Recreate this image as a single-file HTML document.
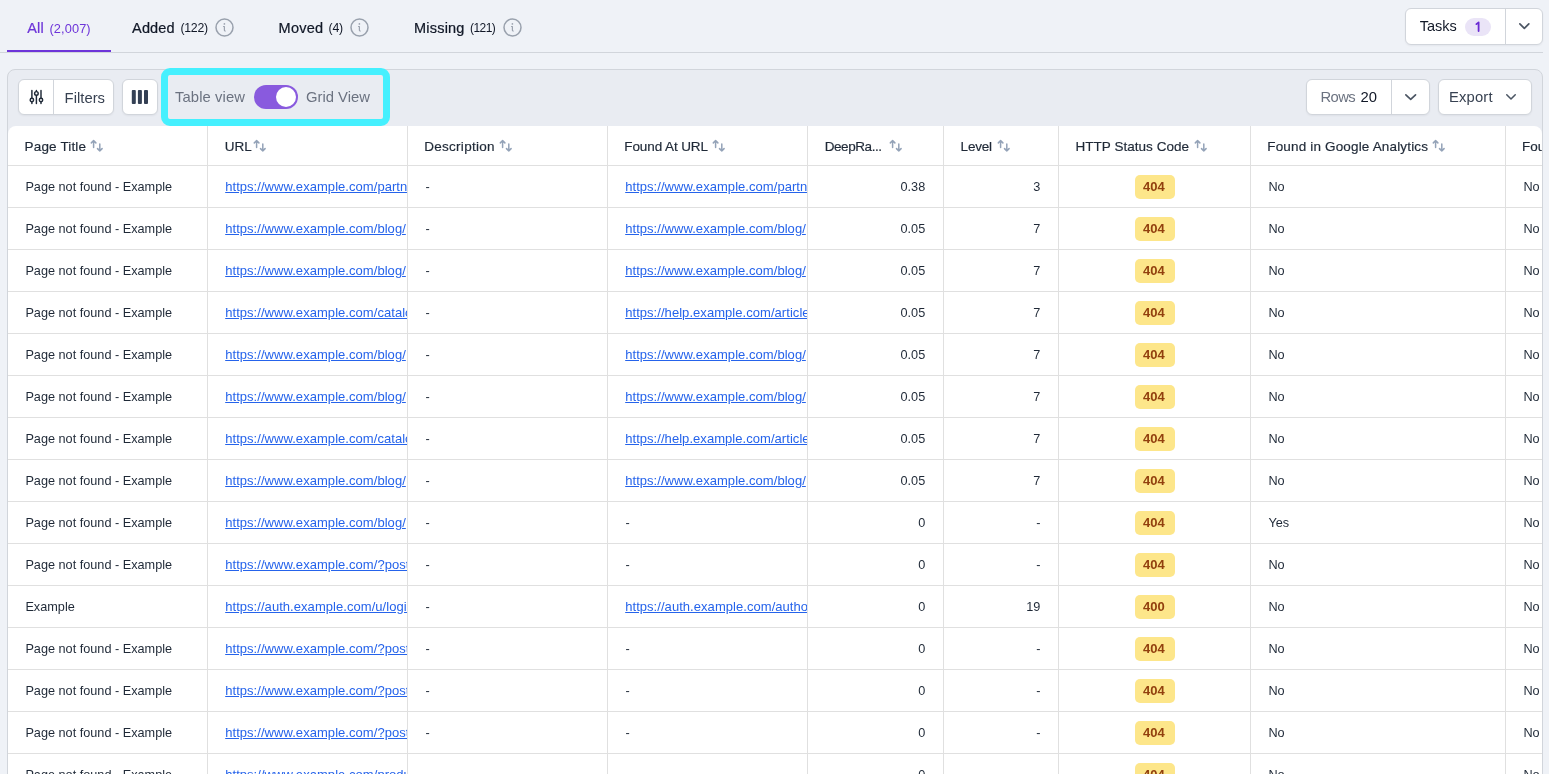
<!DOCTYPE html><html><head><meta charset="utf-8"><style>
*{margin:0;padding:0;box-sizing:border-box}
html,body{width:1549px;height:774px;overflow:hidden;background:#EFF2F7;font-family:"Liberation Sans", sans-serif;color:#1F2937}
.a{position:absolute;white-space:nowrap}
.btn{position:absolute;background:#fff;border:1px solid #D1D5DB;border-radius:6px;box-shadow:0 1px 2px rgba(16,24,40,0.05)}
.lnk{text-decoration:underline;text-underline-offset:1px;overflow:hidden}
.badge{position:absolute;width:40px;height:24px;border-radius:5px;background:#FDE68A}
.vl{position:absolute;width:1px;background:#E0E0E0}
.hl{position:absolute;height:1px;background:#E0E0E0}
</style></head><body><div style="position:absolute;left:0;top:0;width:1549px;height:774px;overflow:hidden;will-change:transform;background:#EFF2F7">
<div class="a" style="left:27.30px;top:18.97px;font-size:14.5px;line-height:18px;letter-spacing:0.100px;color:#6D35D9;-webkit-text-stroke:0.22px #6D35D9;">All</div>
<div class="a" style="left:49.50px;top:20.56px;font-size:12.8px;line-height:16px;letter-spacing:0.092px;color:#6D35D9;">(2,007)</div>
<div class="a" style="left:132.10px;top:18.97px;font-size:14.5px;line-height:18px;letter-spacing:0.113px;color:#111827;-webkit-text-stroke:0.22px #111827;">Added</div>
<div class="a" style="left:180.40px;top:21.24px;font-size:12.3px;line-height:15px;letter-spacing:-0.250px;color:#111827;">(122)</div>
<svg class="a" style="left:215.0px;top:17.5px" width="19" height="19" viewBox="0 0 19 19"><circle cx="9.5" cy="9.5" r="8.5" stroke="#99A1AD" stroke-width="1.5" fill="none"/><circle cx="9.4" cy="5.9" r="0.85" fill="#9CA3AF"/><path d="M8.5 8.5H9.4V12.2Q9.4 13 10.3 13" stroke="#9CA3AF" stroke-width="1.2" fill="none" stroke-linecap="round" stroke-linejoin="round"/></svg>
<div class="a" style="left:278.60px;top:18.97px;font-size:14.5px;line-height:18px;letter-spacing:0.225px;color:#111827;-webkit-text-stroke:0.22px #111827;">Moved</div>
<div class="a" style="left:328.60px;top:21.24px;font-size:12.3px;line-height:15px;letter-spacing:-0.225px;color:#111827;">(4)</div>
<svg class="a" style="left:349.7px;top:17.5px" width="19" height="19" viewBox="0 0 19 19"><circle cx="9.5" cy="9.5" r="8.5" stroke="#99A1AD" stroke-width="1.5" fill="none"/><circle cx="9.4" cy="5.9" r="0.85" fill="#9CA3AF"/><path d="M8.5 8.5H9.4V12.2Q9.4 13 10.3 13" stroke="#9CA3AF" stroke-width="1.2" fill="none" stroke-linecap="round" stroke-linejoin="round"/></svg>
<div class="a" style="left:414.00px;top:18.97px;font-size:14.5px;line-height:18px;letter-spacing:0.208px;color:#111827;-webkit-text-stroke:0.22px #111827;">Missing</div>
<div class="a" style="left:470.00px;top:21.34px;font-size:12.0px;line-height:15px;letter-spacing:-0.550px;color:#111827;">(121)</div>
<svg class="a" style="left:502.8px;top:17.6px" width="19" height="19" viewBox="0 0 19 19"><circle cx="9.5" cy="9.5" r="8.5" stroke="#99A1AD" stroke-width="1.5" fill="none"/><circle cx="9.4" cy="5.9" r="0.85" fill="#9CA3AF"/><path d="M8.5 8.5H9.4V12.2Q9.4 13 10.3 13" stroke="#9CA3AF" stroke-width="1.2" fill="none" stroke-linecap="round" stroke-linejoin="round"/></svg>
<div class="a" style="left:0;top:52px;width:1543px;height:1px;background:#D1D5DB"></div>
<div class="a" style="left:7px;top:50px;width:104px;height:2px;background:#6D35D9"></div>
<div class="btn" style="left:1405px;top:8px;width:138px;height:37px"></div>
<div class="a" style="left:1505px;top:9px;width:1px;height:35px;background:#D1D5DB"></div>
<div class="a" style="left:1419.80px;top:16.77px;font-size:14.5px;line-height:18px;letter-spacing:-0.037px;color:#111827;">Tasks</div>
<div class="a" style="left:1465px;top:18px;width:26px;height:18px;border-radius:9px;background:#EAE4F7"></div>
<svg class="a" style="left:1472px;top:20px" width="12" height="14" viewBox="0 0 12 14"><path d="M4.4 4.1L6.6 2.4V11.1" stroke="#6A2BD3" stroke-width="1.8" fill="none" stroke-linecap="round" stroke-linejoin="round"/></svg>
<svg class="a" style="left:1518.3px;top:22.3px" width="12.7" height="8.3" viewBox="0 0 12.7 8.3"><path d="M1.85 1.85L6.35 6.45L10.85 1.85" stroke="#4B5563" stroke-width="1.7" fill="none" stroke-linecap="round" stroke-linejoin="round"/></svg>
<div class="a" style="left:7px;top:69px;width:1536px;height:720px;background:#E9ECF2;border:1px solid #D1D5DB;border-radius:8px"></div>
<div class="btn" style="left:18px;top:79px;width:96px;height:36px"></div>
<div class="a" style="left:53px;top:80px;width:1px;height:34px;background:#D1D5DB"></div>
<svg class="a" style="left:29px;top:89px" width="16" height="16" viewBox="0 0 16 16"><g stroke="#1F2937" stroke-width="1.45" fill="#fff" stroke-linecap="round"><path d="M2.9 1.4V14.4M7.4 1.4V14.4M12.0 1.4V14.4"/><circle cx="2.9" cy="11.0" r="1.7"/><circle cx="7.4" cy="4.4" r="1.8"/><circle cx="12.0" cy="11.0" r="1.7"/></g></svg>
<div class="a" style="left:64.60px;top:88.77px;font-size:14.8px;line-height:18px;letter-spacing:0.017px;color:#374151;">Filters</div>
<div class="btn" style="left:122px;top:79px;width:36px;height:36px"></div>
<svg class="a" style="left:131px;top:89px" width="18" height="16" viewBox="0 0 18 16"><g fill="#344054"><rect x="0.8" y="1" width="4" height="14" rx="0.9"/><rect x="6.9" y="1" width="4" height="14" rx="0.9"/><rect x="13" y="1" width="4" height="14" rx="0.9"/></g></svg>
<div class="a" style="left:161px;top:68px;width:229px;height:58px;border:7px solid #45F0FE;border-radius:9px;z-index:5"></div>
<div class="a" style="left:175.00px;top:87.67px;font-size:14.8px;line-height:18px;letter-spacing:0.094px;color:#6B7280;">Table view</div>
<div class="a" style="left:254px;top:85px;width:44px;height:24px;border-radius:12px;background:#895ADE"></div>
<div class="a" style="left:276px;top:87px;width:20px;height:20px;border-radius:50%;background:#fff"></div>
<div class="a" style="left:306.00px;top:87.67px;font-size:14.8px;line-height:18px;letter-spacing:0.006px;color:#6B7280;">Grid View</div>
<div class="btn" style="left:1306px;top:79px;width:124px;height:36px"></div>
<div class="a" style="left:1391px;top:80px;width:1px;height:34px;background:#D1D5DB"></div>
<div class="a" style="left:1320.40px;top:87.87px;font-size:14.8px;line-height:18px;letter-spacing:-0.567px;color:#6B7280;">Rows</div>
<div class="a" style="left:1360.60px;top:87.87px;font-size:14.8px;line-height:18px;letter-spacing:-0.050px;color:#111827;">20</div>
<svg class="a" style="left:1404.0px;top:92.7px" width="13.4" height="8.2" viewBox="0 0 13.4 8.2"><path d="M1.85 1.85L6.7 6.3500000000000005L11.55 1.85" stroke="#4B5563" stroke-width="1.7" fill="none" stroke-linecap="round" stroke-linejoin="round"/></svg>
<div class="btn" style="left:1438px;top:79px;width:94px;height:36px"></div>
<div class="a" style="left:1449.00px;top:88.37px;font-size:14.8px;line-height:18px;letter-spacing:0.160px;color:#374151;">Export</div>
<svg class="a" style="left:1505.0px;top:93.2px" width="12" height="7.8" viewBox="0 0 12 7.8"><path d="M1.75 1.75L6.0 6.05L10.25 1.75" stroke="#4B5563" stroke-width="1.5" fill="none" stroke-linecap="round" stroke-linejoin="round"/></svg>
<div class="a" style="left:8px;top:126px;width:1534px;height:660px;background:#fff;border-radius:8px 8px 0 0;overflow:hidden"></div>
<div class="vl" style="left:207px;top:126px;height:660px"></div>
<div class="vl" style="left:407px;top:126px;height:660px"></div>
<div class="vl" style="left:607px;top:126px;height:660px"></div>
<div class="vl" style="left:807px;top:126px;height:660px"></div>
<div class="vl" style="left:943px;top:126px;height:660px"></div>
<div class="vl" style="left:1058px;top:126px;height:660px"></div>
<div class="vl" style="left:1250px;top:126px;height:660px"></div>
<div class="vl" style="left:1505px;top:126px;height:660px"></div>
<div class="hl" style="left:8px;top:165px;width:1534px"></div>
<div class="hl" style="left:8px;top:207px;width:1534px"></div>
<div class="hl" style="left:8px;top:249px;width:1534px"></div>
<div class="hl" style="left:8px;top:291px;width:1534px"></div>
<div class="hl" style="left:8px;top:333px;width:1534px"></div>
<div class="hl" style="left:8px;top:375px;width:1534px"></div>
<div class="hl" style="left:8px;top:417px;width:1534px"></div>
<div class="hl" style="left:8px;top:459px;width:1534px"></div>
<div class="hl" style="left:8px;top:501px;width:1534px"></div>
<div class="hl" style="left:8px;top:543px;width:1534px"></div>
<div class="hl" style="left:8px;top:585px;width:1534px"></div>
<div class="hl" style="left:8px;top:627px;width:1534px"></div>
<div class="hl" style="left:8px;top:669px;width:1534px"></div>
<div class="hl" style="left:8px;top:711px;width:1534px"></div>
<div class="hl" style="left:8px;top:753px;width:1534px"></div>
<div class="hl" style="left:8px;top:795px;width:1534px"></div>
<div class="a" style="left:24.60px;top:137.62px;font-size:13.5px;line-height:17px;letter-spacing:0.150px;color:#1F2937;-webkit-text-stroke:0.18px #1F2937;">Page Title</div>
<svg class="a" style="left:90.2px;top:139px" width="14" height="14" viewBox="0 0 14 14"><g stroke="#94A3B8" stroke-width="1.5" fill="none" stroke-linecap="round" stroke-linejoin="round"><path d="M3.6 8.6V1.6M1.3 3.9L3.6 1.6L5.9 3.9"/><path d="M9.8 4.9V11.9M7.5 9.6L9.8 11.9L12.1 9.6"/></g></svg>
<div class="a" style="left:224.70px;top:137.62px;font-size:13.5px;line-height:17px;letter-spacing:0.000px;color:#1F2937;-webkit-text-stroke:0.18px #1F2937;">URL</div>
<svg class="a" style="left:253.3px;top:139px" width="14" height="14" viewBox="0 0 14 14"><g stroke="#94A3B8" stroke-width="1.5" fill="none" stroke-linecap="round" stroke-linejoin="round"><path d="M3.6 8.6V1.6M1.3 3.9L3.6 1.6L5.9 3.9"/><path d="M9.8 4.9V11.9M7.5 9.6L9.8 11.9L12.1 9.6"/></g></svg>
<div class="a" style="left:424.30px;top:137.62px;font-size:13.5px;line-height:17px;letter-spacing:0.265px;color:#1F2937;-webkit-text-stroke:0.18px #1F2937;">Description</div>
<svg class="a" style="left:499.2px;top:139px" width="14" height="14" viewBox="0 0 14 14"><g stroke="#94A3B8" stroke-width="1.5" fill="none" stroke-linecap="round" stroke-linejoin="round"><path d="M3.6 8.6V1.6M1.3 3.9L3.6 1.6L5.9 3.9"/><path d="M9.8 4.9V11.9M7.5 9.6L9.8 11.9L12.1 9.6"/></g></svg>
<div class="a" style="left:624.30px;top:137.62px;font-size:13.5px;line-height:17px;letter-spacing:-0.100px;color:#1F2937;-webkit-text-stroke:0.18px #1F2937;">Found At URL</div>
<svg class="a" style="left:712.0px;top:139px" width="14" height="14" viewBox="0 0 14 14"><g stroke="#94A3B8" stroke-width="1.5" fill="none" stroke-linecap="round" stroke-linejoin="round"><path d="M3.6 8.6V1.6M1.3 3.9L3.6 1.6L5.9 3.9"/><path d="M9.8 4.9V11.9M7.5 9.6L9.8 11.9L12.1 9.6"/></g></svg>
<div class="a" style="left:824.70px;top:137.62px;font-size:13.5px;line-height:17px;letter-spacing:-0.425px;color:#1F2937;-webkit-text-stroke:0.18px #1F2937;">DeepRa...</div>
<svg class="a" style="left:889.1px;top:139px" width="14" height="14" viewBox="0 0 14 14"><g stroke="#94A3B8" stroke-width="1.5" fill="none" stroke-linecap="round" stroke-linejoin="round"><path d="M3.6 8.6V1.6M1.3 3.9L3.6 1.6L5.9 3.9"/><path d="M9.8 4.9V11.9M7.5 9.6L9.8 11.9L12.1 9.6"/></g></svg>
<div class="a" style="left:960.60px;top:137.62px;font-size:13.5px;line-height:17px;letter-spacing:-0.188px;color:#1F2937;-webkit-text-stroke:0.18px #1F2937;">Level</div>
<svg class="a" style="left:997.2px;top:139px" width="14" height="14" viewBox="0 0 14 14"><g stroke="#94A3B8" stroke-width="1.5" fill="none" stroke-linecap="round" stroke-linejoin="round"><path d="M3.6 8.6V1.6M1.3 3.9L3.6 1.6L5.9 3.9"/><path d="M9.8 4.9V11.9M7.5 9.6L9.8 11.9L12.1 9.6"/></g></svg>
<div class="a" style="left:1075.50px;top:137.62px;font-size:13.5px;line-height:17px;letter-spacing:0.030px;color:#1F2937;-webkit-text-stroke:0.18px #1F2937;">HTTP Status Code</div>
<svg class="a" style="left:1194.0px;top:139px" width="14" height="14" viewBox="0 0 14 14"><g stroke="#94A3B8" stroke-width="1.5" fill="none" stroke-linecap="round" stroke-linejoin="round"><path d="M3.6 8.6V1.6M1.3 3.9L3.6 1.6L5.9 3.9"/><path d="M9.8 4.9V11.9M7.5 9.6L9.8 11.9L12.1 9.6"/></g></svg>
<div class="a" style="left:1267.30px;top:137.62px;font-size:13.5px;line-height:17px;letter-spacing:0.160px;color:#1F2937;-webkit-text-stroke:0.18px #1F2937;">Found in Google Analytics</div>
<svg class="a" style="left:1432.0px;top:139px" width="14" height="14" viewBox="0 0 14 14"><g stroke="#94A3B8" stroke-width="1.5" fill="none" stroke-linecap="round" stroke-linejoin="round"><path d="M3.6 8.6V1.6M1.3 3.9L3.6 1.6L5.9 3.9"/><path d="M9.8 4.9V11.9M7.5 9.6L9.8 11.9L12.1 9.6"/></g></svg>
<div class="a" style="left:1522.00px;top:137.62px;font-size:13.5px;line-height:17px;letter-spacing:0.000px;color:#1F2937;-webkit-text-stroke:0.18px #1F2937;">Found</div>
<div class="a" style="left:25.40px;top:178.90px;font-size:12.7px;line-height:16px;letter-spacing:0.000px;color:#1F2937;">Page not found - Example</div>
<div class="a lnk" style="left:225.20px;top:178.79px;font-size:13px;line-height:16px;letter-spacing:0.05px;color:#2563EB;width:182px;">https://www.example.com/partners/</div>
<div class="a" style="left:425.40px;top:178.90px;font-size:12.7px;line-height:16px;letter-spacing:0.000px;color:#1F2937;">-</div>
<div class="a lnk" style="left:625.20px;top:178.79px;font-size:13px;line-height:16px;letter-spacing:0.05px;color:#2563EB;width:182px;">https://www.example.com/partners/</div>
<div class="a" style="left:900.50px;top:178.90px;font-size:12.7px;line-height:16px;letter-spacing:0.000px;color:#1F2937;">0.38</div>
<div class="a" style="left:1033.35px;top:178.90px;font-size:12.7px;line-height:16px;letter-spacing:0.000px;color:#1F2937;">3</div>
<div class="badge" style="left:1135px;top:175px"></div>
<div class="a" style="left:1143.00px;top:179.09px;font-size:13px;line-height:16px;letter-spacing:0.000px;color:#92400E;font-weight:bold;">404</div>
<div class="a" style="left:1268.40px;top:178.90px;font-size:12.7px;line-height:16px;letter-spacing:0.000px;color:#1F2937;">No</div>
<div class="a" style="left:1523.40px;top:178.90px;font-size:12.7px;line-height:16px;letter-spacing:0.000px;color:#1F2937;">No</div>
<div class="a" style="left:25.40px;top:220.90px;font-size:12.7px;line-height:16px;letter-spacing:0.000px;color:#1F2937;">Page not found - Example</div>
<div class="a lnk" style="left:225.20px;top:220.79px;font-size:13px;line-height:16px;letter-spacing:0.05px;color:#2563EB;width:182px;">https://www.example.com/blog/</div>
<div class="a" style="left:425.40px;top:220.90px;font-size:12.7px;line-height:16px;letter-spacing:0.000px;color:#1F2937;">-</div>
<div class="a lnk" style="left:625.20px;top:220.79px;font-size:13px;line-height:16px;letter-spacing:0.05px;color:#2563EB;width:182px;">https://www.example.com/blog/</div>
<div class="a" style="left:900.50px;top:220.90px;font-size:12.7px;line-height:16px;letter-spacing:0.000px;color:#1F2937;">0.05</div>
<div class="a" style="left:1033.35px;top:220.90px;font-size:12.7px;line-height:16px;letter-spacing:0.000px;color:#1F2937;">7</div>
<div class="badge" style="left:1135px;top:217px"></div>
<div class="a" style="left:1143.00px;top:221.09px;font-size:13px;line-height:16px;letter-spacing:0.000px;color:#92400E;font-weight:bold;">404</div>
<div class="a" style="left:1268.40px;top:220.90px;font-size:12.7px;line-height:16px;letter-spacing:0.000px;color:#1F2937;">No</div>
<div class="a" style="left:1523.40px;top:220.90px;font-size:12.7px;line-height:16px;letter-spacing:0.000px;color:#1F2937;">No</div>
<div class="a" style="left:25.40px;top:262.90px;font-size:12.7px;line-height:16px;letter-spacing:0.000px;color:#1F2937;">Page not found - Example</div>
<div class="a lnk" style="left:225.20px;top:262.79px;font-size:13px;line-height:16px;letter-spacing:0.05px;color:#2563EB;width:182px;">https://www.example.com/blog/</div>
<div class="a" style="left:425.40px;top:262.90px;font-size:12.7px;line-height:16px;letter-spacing:0.000px;color:#1F2937;">-</div>
<div class="a lnk" style="left:625.20px;top:262.79px;font-size:13px;line-height:16px;letter-spacing:0.05px;color:#2563EB;width:182px;">https://www.example.com/blog/</div>
<div class="a" style="left:900.50px;top:262.90px;font-size:12.7px;line-height:16px;letter-spacing:0.000px;color:#1F2937;">0.05</div>
<div class="a" style="left:1033.35px;top:262.90px;font-size:12.7px;line-height:16px;letter-spacing:0.000px;color:#1F2937;">7</div>
<div class="badge" style="left:1135px;top:259px"></div>
<div class="a" style="left:1143.00px;top:263.09px;font-size:13px;line-height:16px;letter-spacing:0.000px;color:#92400E;font-weight:bold;">404</div>
<div class="a" style="left:1268.40px;top:262.90px;font-size:12.7px;line-height:16px;letter-spacing:0.000px;color:#1F2937;">No</div>
<div class="a" style="left:1523.40px;top:262.90px;font-size:12.7px;line-height:16px;letter-spacing:0.000px;color:#1F2937;">No</div>
<div class="a" style="left:25.40px;top:304.90px;font-size:12.7px;line-height:16px;letter-spacing:0.000px;color:#1F2937;">Page not found - Example</div>
<div class="a lnk" style="left:225.20px;top:304.79px;font-size:13px;line-height:16px;letter-spacing:0.05px;color:#2563EB;width:182px;">https://www.example.com/catalog/</div>
<div class="a" style="left:425.40px;top:304.90px;font-size:12.7px;line-height:16px;letter-spacing:0.000px;color:#1F2937;">-</div>
<div class="a lnk" style="left:625.20px;top:304.79px;font-size:13px;line-height:16px;letter-spacing:0.05px;color:#2563EB;width:182px;">https://help.example.com/articles/</div>
<div class="a" style="left:900.50px;top:304.90px;font-size:12.7px;line-height:16px;letter-spacing:0.000px;color:#1F2937;">0.05</div>
<div class="a" style="left:1033.35px;top:304.90px;font-size:12.7px;line-height:16px;letter-spacing:0.000px;color:#1F2937;">7</div>
<div class="badge" style="left:1135px;top:301px"></div>
<div class="a" style="left:1143.00px;top:305.09px;font-size:13px;line-height:16px;letter-spacing:0.000px;color:#92400E;font-weight:bold;">404</div>
<div class="a" style="left:1268.40px;top:304.90px;font-size:12.7px;line-height:16px;letter-spacing:0.000px;color:#1F2937;">No</div>
<div class="a" style="left:1523.40px;top:304.90px;font-size:12.7px;line-height:16px;letter-spacing:0.000px;color:#1F2937;">No</div>
<div class="a" style="left:25.40px;top:346.90px;font-size:12.7px;line-height:16px;letter-spacing:0.000px;color:#1F2937;">Page not found - Example</div>
<div class="a lnk" style="left:225.20px;top:346.79px;font-size:13px;line-height:16px;letter-spacing:0.05px;color:#2563EB;width:182px;">https://www.example.com/blog/</div>
<div class="a" style="left:425.40px;top:346.90px;font-size:12.7px;line-height:16px;letter-spacing:0.000px;color:#1F2937;">-</div>
<div class="a lnk" style="left:625.20px;top:346.79px;font-size:13px;line-height:16px;letter-spacing:0.05px;color:#2563EB;width:182px;">https://www.example.com/blog/</div>
<div class="a" style="left:900.50px;top:346.90px;font-size:12.7px;line-height:16px;letter-spacing:0.000px;color:#1F2937;">0.05</div>
<div class="a" style="left:1033.35px;top:346.90px;font-size:12.7px;line-height:16px;letter-spacing:0.000px;color:#1F2937;">7</div>
<div class="badge" style="left:1135px;top:343px"></div>
<div class="a" style="left:1143.00px;top:347.09px;font-size:13px;line-height:16px;letter-spacing:0.000px;color:#92400E;font-weight:bold;">404</div>
<div class="a" style="left:1268.40px;top:346.90px;font-size:12.7px;line-height:16px;letter-spacing:0.000px;color:#1F2937;">No</div>
<div class="a" style="left:1523.40px;top:346.90px;font-size:12.7px;line-height:16px;letter-spacing:0.000px;color:#1F2937;">No</div>
<div class="a" style="left:25.40px;top:388.90px;font-size:12.7px;line-height:16px;letter-spacing:0.000px;color:#1F2937;">Page not found - Example</div>
<div class="a lnk" style="left:225.20px;top:388.79px;font-size:13px;line-height:16px;letter-spacing:0.05px;color:#2563EB;width:182px;">https://www.example.com/blog/</div>
<div class="a" style="left:425.40px;top:388.90px;font-size:12.7px;line-height:16px;letter-spacing:0.000px;color:#1F2937;">-</div>
<div class="a lnk" style="left:625.20px;top:388.79px;font-size:13px;line-height:16px;letter-spacing:0.05px;color:#2563EB;width:182px;">https://www.example.com/blog/</div>
<div class="a" style="left:900.50px;top:388.90px;font-size:12.7px;line-height:16px;letter-spacing:0.000px;color:#1F2937;">0.05</div>
<div class="a" style="left:1033.35px;top:388.90px;font-size:12.7px;line-height:16px;letter-spacing:0.000px;color:#1F2937;">7</div>
<div class="badge" style="left:1135px;top:385px"></div>
<div class="a" style="left:1143.00px;top:389.09px;font-size:13px;line-height:16px;letter-spacing:0.000px;color:#92400E;font-weight:bold;">404</div>
<div class="a" style="left:1268.40px;top:388.90px;font-size:12.7px;line-height:16px;letter-spacing:0.000px;color:#1F2937;">No</div>
<div class="a" style="left:1523.40px;top:388.90px;font-size:12.7px;line-height:16px;letter-spacing:0.000px;color:#1F2937;">No</div>
<div class="a" style="left:25.40px;top:430.90px;font-size:12.7px;line-height:16px;letter-spacing:0.000px;color:#1F2937;">Page not found - Example</div>
<div class="a lnk" style="left:225.20px;top:430.79px;font-size:13px;line-height:16px;letter-spacing:0.05px;color:#2563EB;width:182px;">https://www.example.com/catalog/</div>
<div class="a" style="left:425.40px;top:430.90px;font-size:12.7px;line-height:16px;letter-spacing:0.000px;color:#1F2937;">-</div>
<div class="a lnk" style="left:625.20px;top:430.79px;font-size:13px;line-height:16px;letter-spacing:0.05px;color:#2563EB;width:182px;">https://help.example.com/articles/</div>
<div class="a" style="left:900.50px;top:430.90px;font-size:12.7px;line-height:16px;letter-spacing:0.000px;color:#1F2937;">0.05</div>
<div class="a" style="left:1033.35px;top:430.90px;font-size:12.7px;line-height:16px;letter-spacing:0.000px;color:#1F2937;">7</div>
<div class="badge" style="left:1135px;top:427px"></div>
<div class="a" style="left:1143.00px;top:431.09px;font-size:13px;line-height:16px;letter-spacing:0.000px;color:#92400E;font-weight:bold;">404</div>
<div class="a" style="left:1268.40px;top:430.90px;font-size:12.7px;line-height:16px;letter-spacing:0.000px;color:#1F2937;">No</div>
<div class="a" style="left:1523.40px;top:430.90px;font-size:12.7px;line-height:16px;letter-spacing:0.000px;color:#1F2937;">No</div>
<div class="a" style="left:25.40px;top:472.90px;font-size:12.7px;line-height:16px;letter-spacing:0.000px;color:#1F2937;">Page not found - Example</div>
<div class="a lnk" style="left:225.20px;top:472.79px;font-size:13px;line-height:16px;letter-spacing:0.05px;color:#2563EB;width:182px;">https://www.example.com/blog/</div>
<div class="a" style="left:425.40px;top:472.90px;font-size:12.7px;line-height:16px;letter-spacing:0.000px;color:#1F2937;">-</div>
<div class="a lnk" style="left:625.20px;top:472.79px;font-size:13px;line-height:16px;letter-spacing:0.05px;color:#2563EB;width:182px;">https://www.example.com/blog/</div>
<div class="a" style="left:900.50px;top:472.90px;font-size:12.7px;line-height:16px;letter-spacing:0.000px;color:#1F2937;">0.05</div>
<div class="a" style="left:1033.35px;top:472.90px;font-size:12.7px;line-height:16px;letter-spacing:0.000px;color:#1F2937;">7</div>
<div class="badge" style="left:1135px;top:469px"></div>
<div class="a" style="left:1143.00px;top:473.09px;font-size:13px;line-height:16px;letter-spacing:0.000px;color:#92400E;font-weight:bold;">404</div>
<div class="a" style="left:1268.40px;top:472.90px;font-size:12.7px;line-height:16px;letter-spacing:0.000px;color:#1F2937;">No</div>
<div class="a" style="left:1523.40px;top:472.90px;font-size:12.7px;line-height:16px;letter-spacing:0.000px;color:#1F2937;">No</div>
<div class="a" style="left:25.40px;top:514.90px;font-size:12.7px;line-height:16px;letter-spacing:0.000px;color:#1F2937;">Page not found - Example</div>
<div class="a lnk" style="left:225.20px;top:514.79px;font-size:13px;line-height:16px;letter-spacing:0.05px;color:#2563EB;width:182px;">https://www.example.com/blog/</div>
<div class="a" style="left:425.40px;top:514.90px;font-size:12.7px;line-height:16px;letter-spacing:0.000px;color:#1F2937;">-</div>
<div class="a" style="left:625.40px;top:514.90px;font-size:12.7px;line-height:16px;letter-spacing:0.000px;color:#1F2937;">-</div>
<div class="a" style="left:918.15px;top:514.90px;font-size:12.7px;line-height:16px;letter-spacing:0.000px;color:#1F2937;">0</div>
<div class="a" style="left:1036.15px;top:514.90px;font-size:12.7px;line-height:16px;letter-spacing:0.000px;color:#1F2937;">-</div>
<div class="badge" style="left:1135px;top:511px"></div>
<div class="a" style="left:1143.00px;top:515.09px;font-size:13px;line-height:16px;letter-spacing:0.000px;color:#92400E;font-weight:bold;">404</div>
<div class="a" style="left:1268.40px;top:514.90px;font-size:12.7px;line-height:16px;letter-spacing:0.000px;color:#1F2937;">Yes</div>
<div class="a" style="left:1523.40px;top:514.90px;font-size:12.7px;line-height:16px;letter-spacing:0.000px;color:#1F2937;">No</div>
<div class="a" style="left:25.40px;top:556.90px;font-size:12.7px;line-height:16px;letter-spacing:0.000px;color:#1F2937;">Page not found - Example</div>
<div class="a lnk" style="left:225.20px;top:556.79px;font-size:13px;line-height:16px;letter-spacing:0.05px;color:#2563EB;width:182px;">https://www.example.com/?post=1</div>
<div class="a" style="left:425.40px;top:556.90px;font-size:12.7px;line-height:16px;letter-spacing:0.000px;color:#1F2937;">-</div>
<div class="a" style="left:625.40px;top:556.90px;font-size:12.7px;line-height:16px;letter-spacing:0.000px;color:#1F2937;">-</div>
<div class="a" style="left:918.15px;top:556.90px;font-size:12.7px;line-height:16px;letter-spacing:0.000px;color:#1F2937;">0</div>
<div class="a" style="left:1036.15px;top:556.90px;font-size:12.7px;line-height:16px;letter-spacing:0.000px;color:#1F2937;">-</div>
<div class="badge" style="left:1135px;top:553px"></div>
<div class="a" style="left:1143.00px;top:557.09px;font-size:13px;line-height:16px;letter-spacing:0.000px;color:#92400E;font-weight:bold;">404</div>
<div class="a" style="left:1268.40px;top:556.90px;font-size:12.7px;line-height:16px;letter-spacing:0.000px;color:#1F2937;">No</div>
<div class="a" style="left:1523.40px;top:556.90px;font-size:12.7px;line-height:16px;letter-spacing:0.000px;color:#1F2937;">No</div>
<div class="a" style="left:25.40px;top:598.90px;font-size:12.7px;line-height:16px;letter-spacing:0.000px;color:#1F2937;">Example</div>
<div class="a lnk" style="left:225.20px;top:598.79px;font-size:13px;line-height:16px;letter-spacing:0.05px;color:#2563EB;width:182px;">https://auth.example.com/u/login</div>
<div class="a" style="left:425.40px;top:598.90px;font-size:12.7px;line-height:16px;letter-spacing:0.000px;color:#1F2937;">-</div>
<div class="a lnk" style="left:625.20px;top:598.79px;font-size:13px;line-height:16px;letter-spacing:0.05px;color:#2563EB;width:182px;">https://auth.example.com/authorize</div>
<div class="a" style="left:918.15px;top:598.90px;font-size:12.7px;line-height:16px;letter-spacing:0.000px;color:#1F2937;">0</div>
<div class="a" style="left:1026.25px;top:598.90px;font-size:12.7px;line-height:16px;letter-spacing:0.000px;color:#1F2937;">19</div>
<div class="badge" style="left:1135px;top:595px"></div>
<div class="a" style="left:1143.00px;top:599.09px;font-size:13px;line-height:16px;letter-spacing:0.000px;color:#92400E;font-weight:bold;">400</div>
<div class="a" style="left:1268.40px;top:598.90px;font-size:12.7px;line-height:16px;letter-spacing:0.000px;color:#1F2937;">No</div>
<div class="a" style="left:1523.40px;top:598.90px;font-size:12.7px;line-height:16px;letter-spacing:0.000px;color:#1F2937;">No</div>
<div class="a" style="left:25.40px;top:640.90px;font-size:12.7px;line-height:16px;letter-spacing:0.000px;color:#1F2937;">Page not found - Example</div>
<div class="a lnk" style="left:225.20px;top:640.79px;font-size:13px;line-height:16px;letter-spacing:0.05px;color:#2563EB;width:182px;">https://www.example.com/?post=2</div>
<div class="a" style="left:425.40px;top:640.90px;font-size:12.7px;line-height:16px;letter-spacing:0.000px;color:#1F2937;">-</div>
<div class="a" style="left:625.40px;top:640.90px;font-size:12.7px;line-height:16px;letter-spacing:0.000px;color:#1F2937;">-</div>
<div class="a" style="left:918.15px;top:640.90px;font-size:12.7px;line-height:16px;letter-spacing:0.000px;color:#1F2937;">0</div>
<div class="a" style="left:1036.15px;top:640.90px;font-size:12.7px;line-height:16px;letter-spacing:0.000px;color:#1F2937;">-</div>
<div class="badge" style="left:1135px;top:637px"></div>
<div class="a" style="left:1143.00px;top:641.09px;font-size:13px;line-height:16px;letter-spacing:0.000px;color:#92400E;font-weight:bold;">404</div>
<div class="a" style="left:1268.40px;top:640.90px;font-size:12.7px;line-height:16px;letter-spacing:0.000px;color:#1F2937;">No</div>
<div class="a" style="left:1523.40px;top:640.90px;font-size:12.7px;line-height:16px;letter-spacing:0.000px;color:#1F2937;">No</div>
<div class="a" style="left:25.40px;top:682.90px;font-size:12.7px;line-height:16px;letter-spacing:0.000px;color:#1F2937;">Page not found - Example</div>
<div class="a lnk" style="left:225.20px;top:682.79px;font-size:13px;line-height:16px;letter-spacing:0.05px;color:#2563EB;width:182px;">https://www.example.com/?post=3</div>
<div class="a" style="left:425.40px;top:682.90px;font-size:12.7px;line-height:16px;letter-spacing:0.000px;color:#1F2937;">-</div>
<div class="a" style="left:625.40px;top:682.90px;font-size:12.7px;line-height:16px;letter-spacing:0.000px;color:#1F2937;">-</div>
<div class="a" style="left:918.15px;top:682.90px;font-size:12.7px;line-height:16px;letter-spacing:0.000px;color:#1F2937;">0</div>
<div class="a" style="left:1036.15px;top:682.90px;font-size:12.7px;line-height:16px;letter-spacing:0.000px;color:#1F2937;">-</div>
<div class="badge" style="left:1135px;top:679px"></div>
<div class="a" style="left:1143.00px;top:683.09px;font-size:13px;line-height:16px;letter-spacing:0.000px;color:#92400E;font-weight:bold;">404</div>
<div class="a" style="left:1268.40px;top:682.90px;font-size:12.7px;line-height:16px;letter-spacing:0.000px;color:#1F2937;">No</div>
<div class="a" style="left:1523.40px;top:682.90px;font-size:12.7px;line-height:16px;letter-spacing:0.000px;color:#1F2937;">No</div>
<div class="a" style="left:25.40px;top:724.90px;font-size:12.7px;line-height:16px;letter-spacing:0.000px;color:#1F2937;">Page not found - Example</div>
<div class="a lnk" style="left:225.20px;top:724.79px;font-size:13px;line-height:16px;letter-spacing:0.05px;color:#2563EB;width:182px;">https://www.example.com/?post=4</div>
<div class="a" style="left:425.40px;top:724.90px;font-size:12.7px;line-height:16px;letter-spacing:0.000px;color:#1F2937;">-</div>
<div class="a" style="left:625.40px;top:724.90px;font-size:12.7px;line-height:16px;letter-spacing:0.000px;color:#1F2937;">-</div>
<div class="a" style="left:918.15px;top:724.90px;font-size:12.7px;line-height:16px;letter-spacing:0.000px;color:#1F2937;">0</div>
<div class="a" style="left:1036.15px;top:724.90px;font-size:12.7px;line-height:16px;letter-spacing:0.000px;color:#1F2937;">-</div>
<div class="badge" style="left:1135px;top:721px"></div>
<div class="a" style="left:1143.00px;top:725.09px;font-size:13px;line-height:16px;letter-spacing:0.000px;color:#92400E;font-weight:bold;">404</div>
<div class="a" style="left:1268.40px;top:724.90px;font-size:12.7px;line-height:16px;letter-spacing:0.000px;color:#1F2937;">No</div>
<div class="a" style="left:1523.40px;top:724.90px;font-size:12.7px;line-height:16px;letter-spacing:0.000px;color:#1F2937;">No</div>
<div class="a" style="left:25.40px;top:766.90px;font-size:12.7px;line-height:16px;letter-spacing:0.000px;color:#1F2937;">Page not found - Example</div>
<div class="a lnk" style="left:225.20px;top:766.79px;font-size:13px;line-height:16px;letter-spacing:0.05px;color:#2563EB;width:182px;">https://www.example.com/products/</div>
<div class="a" style="left:425.40px;top:766.90px;font-size:12.7px;line-height:16px;letter-spacing:0.000px;color:#1F2937;">-</div>
<div class="a" style="left:625.40px;top:766.90px;font-size:12.7px;line-height:16px;letter-spacing:0.000px;color:#1F2937;">-</div>
<div class="a" style="left:918.15px;top:766.90px;font-size:12.7px;line-height:16px;letter-spacing:0.000px;color:#1F2937;">0</div>
<div class="a" style="left:1036.15px;top:766.90px;font-size:12.7px;line-height:16px;letter-spacing:0.000px;color:#1F2937;">-</div>
<div class="badge" style="left:1135px;top:763px"></div>
<div class="a" style="left:1143.00px;top:767.09px;font-size:13px;line-height:16px;letter-spacing:0.000px;color:#92400E;font-weight:bold;">404</div>
<div class="a" style="left:1268.40px;top:766.90px;font-size:12.7px;line-height:16px;letter-spacing:0.000px;color:#1F2937;">No</div>
<div class="a" style="left:1523.40px;top:766.90px;font-size:12.7px;line-height:16px;letter-spacing:0.000px;color:#1F2937;">No</div>
<div class="a" style="left:1542px;top:126px;width:1px;height:660px;background:#D1D5DB"></div>
<div class="a" style="left:1543px;top:53px;width:6px;height:721px;background:#EFF2F7;z-index:9"></div>
</div></body></html>
